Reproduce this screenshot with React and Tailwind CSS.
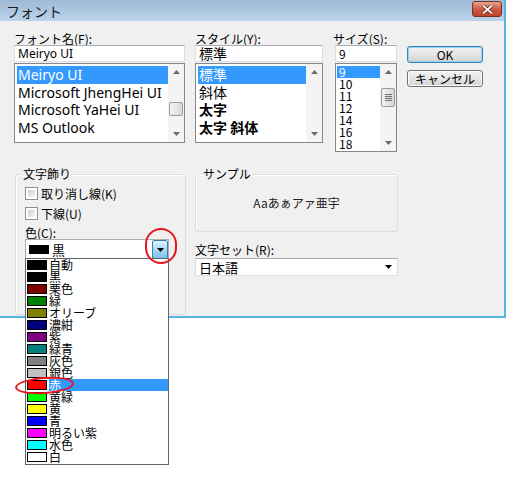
import React from 'react';

const jp = { fontFamily: '"Noto Sans CJK JP", "Noto Sans", sans-serif' };

const fontItems = ['Meiryo UI', 'Microsoft JhengHei UI', 'Microsoft YaHei UI', 'MS Outlook'];
const styleItems = [
  { label: '標準', cls: 'font-normal' },
  { label: '斜体', cls: 'font-normal' },
  { label: '太字', cls: 'font-bold' },
  { label: '太字 斜体', cls: 'font-bold' },
];
const sizeItems = ['9', '10', '11', '12', '14', '16', '18'];
const colorItems = [
  ['自動', 'bg-[#000000]'],
  ['黒', 'bg-[#000000]'],
  ['栗色', 'bg-[#800000]'],
  ['緑', 'bg-[#008000]'],
  ['オリーブ', 'bg-[#808000]'],
  ['濃紺', 'bg-[#000080]'],
  ['紫', 'bg-[#800080]'],
  ['緑青', 'bg-[#008080]'],
  ['灰色', 'bg-[#808080]'],
  ['銀色', 'bg-[#c0c0c0]'],
  ['赤', 'bg-[#ff0000]'],
  ['黄緑', 'bg-[#00ff00]'],
  ['黄', 'bg-[#ffff00]'],
  ['青', 'bg-[#0000ff]'],
  ['明るい紫', 'bg-[#ff00ff]'],
  ['水色', 'bg-[#00ffff]'],
  ['白', 'bg-[#ffffff]'],
];

const Arrow = ({ down, color = '#6b6b6b' }) => (
  <svg width="7" height="4" viewBox="0 0 7 4">
    <path d={down ? 'M0 0L7 0L3.5 4Z' : 'M0 4L3.5 0L7 4Z'} fill={color} />
  </svg>
);

const ScrollBar = ({ thumbClass, grip }) => (
  <div className="relative w-[16px] h-full bg-[#f4f4f4] flex flex-col justify-between">
    <div className="h-[16px] flex items-center justify-center">
      <Arrow />
    </div>
    <div className="h-[16px] flex items-center justify-center">
      <Arrow down />
    </div>
    <div
      className={`absolute left-[1px] right-[1px] rounded-[2px] border border-[#9a9a9a] bg-gradient-to-r from-[#f3f3f3] to-[#d8d8d8] flex flex-col items-center justify-center gap-[1px] ${thumbClass}`}
    >
      {grip && (
        <>
          <div className="w-[7px] h-[1px] bg-[#6f6f6f]" />
          <div className="w-[7px] h-[1px] bg-[#6f6f6f]" />
          <div className="w-[7px] h-[1px] bg-[#6f6f6f]" />
          <div className="w-[7px] h-[1px] bg-[#6f6f6f]" />
        </>
      )}
    </div>
  </div>
);

const TextBox = ({ children, cls = '' }) => (
  <div
    className={`h-[17px] bg-white border border-[#dbdfe6] border-t-[#abadb3] pl-[3px] flex items-center text-[12px] text-black ${cls}`}
  >
    {children}
  </div>
);

const CheckBox = ({ label }) => (
  <div className="flex items-center gap-[3px] h-[13px]">
    <div className="w-[13px] h-[13px] border border-[#8e8f8f] bg-white p-[2px]">
      <div className="w-full h-full bg-gradient-to-br from-[#cbcfd5] to-[#f6f6f6]" />
    </div>
    <span className="text-[12px] leading-[13px]">{label}</span>
  </div>
);

const Button = ({ children, primary }) => (
  <div
    className={`h-[17px] rounded-[3px] border flex items-center justify-center text-[12px] text-black bg-gradient-to-b from-[#f2f2f2] via-[#e6e6e6] to-[#d3d3d3] ${
      primary ? 'border-[#3c7fb1] shadow-[inset_0_0_0_1px_#8ed5f5]' : 'border-[#707070] shadow-[inset_0_0_0_1px_#fcfcfc]'
    }`}
  >
    {children}
  </div>
);

const GroupBox = ({ label, cls, children }) => (
  <div className={`relative border border-[#d5dfe5] rounded-[3px] shadow-[inset_1px_1px_0_#ffffff] ${cls}`}>
    <span className="absolute left-[6px] top-[-8px] px-[1px] bg-[#f0f0f0] text-[12px] leading-[13px]">{label}</span>
    {children}
  </div>
);

export default function App() {
  return (
    <div className="relative w-[508px] h-[478px] bg-white overflow-hidden text-black" style={jp}>
      {/* window */}
      <div className="w-[506px] h-[318px] border-r-[2px] border-b-[2px] border-[#57b3e0] flex flex-col">
        {/* title bar */}
        <div className="h-[21px] bg-gradient-to-b from-[#9fbad7] to-[#bcd3ea] flex items-center justify-between pl-[6px] pr-[2px]">
          <span className="text-[14px] leading-[14px] text-[#1b1b1b]">フォント</span>
          <div className="w-[30px] h-[16px] mb-[3px] rounded-[3px] border border-[#7e2f22] bg-gradient-to-b from-[#e4a593] via-[#cc5a44] to-[#c2422c] flex items-center justify-center">
            <svg width="11" height="9" viewBox="0 0 11 9">
              <path d="M1 0.5L5.5 4.5L10 0.5M1 8.5L5.5 4.5L10 8.5" stroke="#5a1a10" strokeWidth="3.2" fill="none" />
              <path d="M1 0.5L5.5 4.5L10 0.5M1 8.5L5.5 4.5L10 8.5" stroke="#ffffff" strokeWidth="1.8" fill="none" />
            </svg>
          </div>
        </div>

        {/* client */}
        <div className="flex-1 bg-[#f0f0f0] pl-[14px] pt-[11px] flex flex-col">
          {/* top row */}
          <div className="flex items-start">
            {/* font name */}
            <div className="w-[171px] flex flex-col">
              <div className="h-[13px] text-[12px] leading-[13px]">フォント名(F):</div>
              <TextBox>
                <span style={{ fontFamily: '"Noto Sans", sans-serif' }}>Meiryo UI</span>
              </TextBox>
              <div className="mt-[1px] h-[80px] bg-white border border-[#828790] flex">
                <div className="flex-1 pt-[2px] pl-[2px] overflow-hidden" style={{ fontFamily: '"Noto Sans", sans-serif' }}>
                  {fontItems.map((f, i) => (
                    <div
                      key={f}
                      className={`h-[17.5px] pl-[1px] text-[14px] leading-[17px] whitespace-nowrap ${
                        i === 0 ? 'bg-[#3399ff] text-white' : ''
                      }`}
                    >
                      {f}
                    </div>
                  ))}
                </div>
                <ScrollBar thumbClass="top-[38px] h-[14px]" />
              </div>
            </div>

            {/* style */}
            <div className="w-[128px] ml-[10px] flex flex-col">
              <div className="h-[13px] text-[12px] leading-[13px]">スタイル(Y):</div>
              <TextBox cls="text-[14px]">標準</TextBox>
              <div className="mt-[1px] h-[80px] bg-white border border-[#828790] flex">
                <div className="flex-1 pt-[2px] pl-[2px] overflow-hidden">
                  {styleItems.map((s, i) => (
                    <div
                      key={s.label}
                      className={`h-[17.5px] pl-[1px] text-[14px] leading-[17px] whitespace-nowrap ${s.cls} ${
                        i === 0 ? 'bg-[#3399ff] text-white' : ''
                      }`}
                    >
                      {s.label}
                    </div>
                  ))}
                </div>
                <ScrollBar thumbClass="hidden" />
              </div>
            </div>

            {/* size */}
            <div className="w-[62px] ml-[12px] flex flex-col">
              <div className="h-[13px] text-[12px] leading-[13px] -ml-[2px]">サイズ(S):</div>
              <TextBox>9</TextBox>
              <div className="mt-[1px] h-[89px] bg-white border border-[#828790] flex">
                <div className="flex-1 pt-[2px] pl-[1px] overflow-hidden">
                  {sizeItems.map((s, i) => (
                    <div
                      key={s}
                      className={`h-[12px] pl-[2px] text-[12px] leading-[12px] ${i === 0 ? 'bg-[#3399ff] text-white' : ''}`}
                    >
                      {s}
                    </div>
                  ))}
                </div>
                <ScrollBar thumbClass="top-[24px] h-[19px]" grip />
              </div>
            </div>

            {/* buttons */}
            <div className="w-[76px] ml-[10px] mt-[14px] flex flex-col gap-[7px]">
              <Button primary>OK</Button>
              <Button>キャンセル</Button>
            </div>
          </div>

          {/* bottom row */}
          <div className="flex items-start mt-[22px]">
            <GroupBox label="文字飾り" cls="w-[171px] h-[141px] ml-[1px] pl-[9px] pt-[12px]">
              <div className="flex flex-col gap-[7px]">
                <CheckBox label="取り消し線(K)" />
                <CheckBox label="下線(U)" />
              </div>
              <div className="mt-[6px] h-[13px] text-[12px] leading-[13px]">色(C):</div>
              <div className="relative w-[144px] h-[21px] bg-white border border-[#abadb3] flex items-center">
                <div className="ml-[3px] w-[20px] h-[9px] bg-black" />
                <span className="ml-[3px] text-[13px] leading-[13px]">黒</span>
                <div className="absolute right-0 top-0 bottom-0 w-[16px] border border-[#3c7fb1] rounded-[2px] bg-gradient-to-b from-[#e3f3fc] via-[#a9d9f5] to-[#7fbde8] flex items-center justify-center">
                  <Arrow down color="#000000" />
                </div>
              </div>
            </GroupBox>

            <div className="ml-[9px] w-[203px] flex flex-col">
              <GroupBox label="サンプル" cls="h-[58px] flex items-center justify-center">
                <span className="text-[12px] text-[#222]">Aaあぁアァ亜宇</span>
              </GroupBox>
              <div className="mt-[11px] h-[13px] text-[12px] leading-[13px]">文字セット(R):</div>
              <div className="mt-[2px] h-[18px] bg-white border border-[#dbdfe6] border-t-[#abadb3] flex items-center justify-between pl-[3px] pr-[5px]">
                <span className="text-[13px] leading-[13px]">日本語</span>
                <Arrow down color="#000000" />
              </div>
            </div>
          </div>
        </div>
      </div>

      {/* dropped-down color list */}
      <div className="absolute left-[25px] top-[258px] w-[144px] bg-white border border-[#646464] pb-[1px]">
        {colorItems.map(([name, sw], i) => (
          <div key={name} className="h-[12px] flex items-center">
            <div className={`ml-[1px] w-[20px] h-[10px] border border-black ${sw}`} />
            <div
              className={`ml-[2px] flex-1 h-[12px] text-[12px] leading-[12px] ${
                i === 10 ? 'bg-[#3399ff] text-white' : 'text-black'
              }`}
            >
              {name}
            </div>
          </div>
        ))}
      </div>

      {/* red annotation circles */}
      <div className="absolute left-[145px] top-[228px] w-[32px] h-[36px] rounded-full border-[2px] border-[#e8141c]" />
      <div className="absolute left-[15px] top-[377px] w-[59px] h-[17px] rounded-[50%] border-[2px] border-[#e8141c] -rotate-[4deg]" />
    </div>
  );
}
